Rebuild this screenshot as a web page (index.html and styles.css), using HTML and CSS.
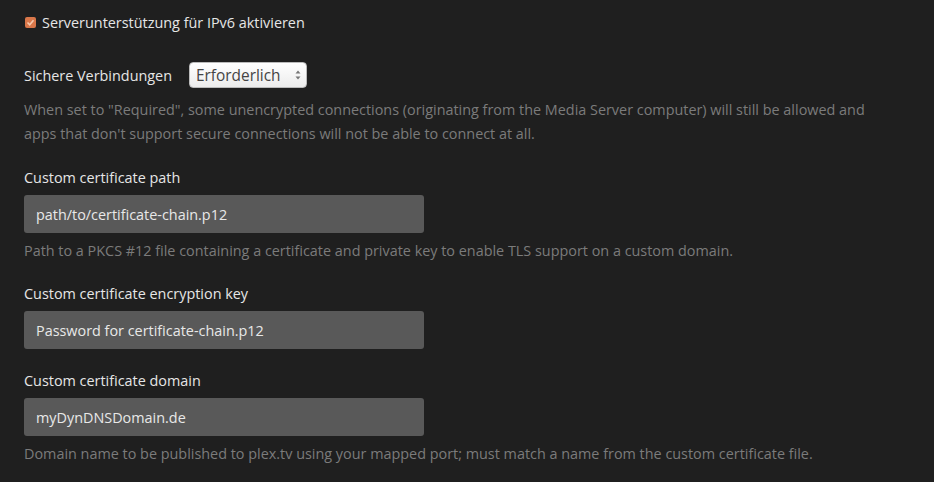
FILE: index.html
```html
<!DOCTYPE html>
<html>
<head>
<meta charset="utf-8">
<link rel="stylesheet" href="styles.css">
</head>
<body>
<div class="page">
  <label class="check-row">
    <span class="checkbox"><svg width="9" height="9" viewBox="0 0 9 9"><path d="M1.5 4.5 L3.7 6.7 L7.5 2.2" fill="none" stroke="#f7c9ad" stroke-width="1.6"/></svg></span>
    <span class="check-label">Serverunterstützung für IPv6 aktivieren</span>
  </label>

  <div class="select-row">
    <span class="label">Sichere Verbindungen</span>
    <span class="select">Erforderlich<span class="arrows"><svg width="6" height="12" viewBox="0 0 6 12"><path d="M0.5 4.5 L3 1.5 L5.5 4.5Z M0.5 7.5 L3 10.5 L5.5 7.5Z" fill="#777"/></svg></span></span>
  </div>
  <p class="help two">When set to "Required", some unencrypted connections (originating from the Media Server computer) will still be allowed and apps that don't support secure connections will not be able to connect at all.</p>

  <div class="field">
    <div class="field-label">Custom certificate path</div>
    <div class="input">path/to/certificate-chain.p12</div>
    <p class="help">Path to a PKCS #12 file containing a certificate and private key to enable TLS support on a custom domain.</p>
  </div>

  <div class="field">
    <div class="field-label">Custom certificate encryption key</div>
    <div class="input">Password for certificate-chain.p12</div>
  </div>

  <div class="field">
    <div class="field-label">Custom certificate domain</div>
    <div class="input">myDynDNSDomain.de</div>
    <p class="help">Domain name to be published to plex.tv using your mapped port; must match a name from the custom certificate file.</p>
  </div>
</div>
</body>
</html>
```
FILE: styles.css
```css
html, body {
  margin: 0;
  padding: 0;
  background: #1f1f1f;
}
body {
  font-family: "Open Sans", "Noto Sans", sans-serif;
  font-size: 14.4px;
  color: #e6e6e6;
  width: 934px;
  height: 482px;
  overflow: hidden;
}
.page {
  padding: 10px 24px 0 24px;
}
.check-row {
  display: flex;
  align-items: center;
  height: 24px;
}
.checkbox {
  width: 11px;
  height: 11px;
  background: #d9774a;
  border-radius: 2px;
  display: flex;
  align-items: center;
  justify-content: center;
  margin-left: 1px;
  margin-right: 6px;
}
.checkbox svg { display: block; }
.select-row {
  display: flex;
  align-items: center;
  margin-top: 27px;
  height: 28px;
}
.label {
  margin-right: 17px;
}
.select {
  display: flex;
  align-items: center;
  height: 26px;
  width: 118px;
  box-sizing: border-box;
  padding: 0 0 0 6px;
  background: linear-gradient(#ffffff, #ececec);
  border: 1px solid #bbb;
  border-radius: 4px;
  color: #444;
  font-size: 15.4px;
}
.arrows {
  margin-left: auto;
  margin-right: 5px;
  display: flex;
}
.help {
  margin: 0;
  color: #7b7b7b;
  line-height: 24px;
}
.help.two {
  margin-top: 9px;
  max-width: 860px;
}
.field {
  margin-top: 20px;
}
.field-label {
  line-height: 24px;
  margin-bottom: 5px;
}
.input {
  width: 400px;
  height: 38px;
  box-sizing: border-box;
  background: #595959;
  border-radius: 3px;
  color: #e8e8e8;
  padding: 0 12px;
  display: flex;
  align-items: center;
}
.input + .help {
  margin-top: 6px;
  margin-bottom: -1px;
}
```
